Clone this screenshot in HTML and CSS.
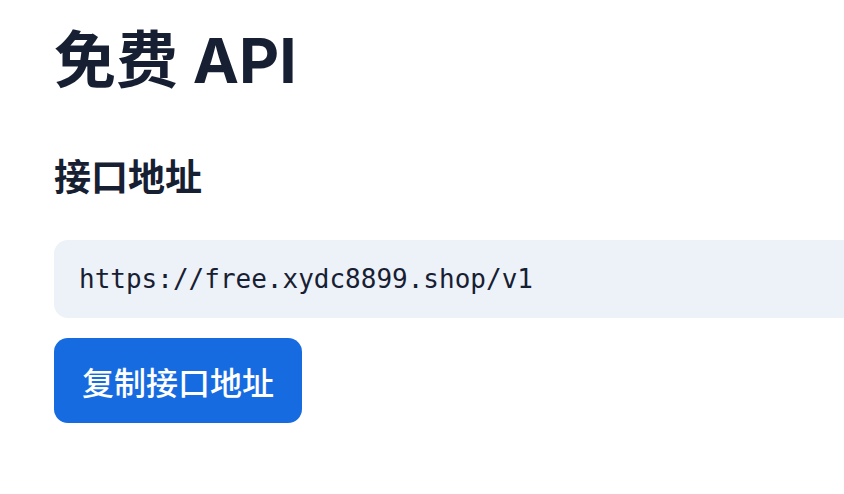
FILE: index.html
```html
<!DOCTYPE html>
<html lang="zh-CN">
<head>
<meta charset="utf-8">
<title>免费 API</title>
<link rel="stylesheet" href="styles.css">
</head>
<body>
<main class="page">
  <h1 class="title">免费 API</h1>
  <h2 class="section-title">接口地址</h2>
  <div class="endpoint"><code class="endpoint-url">https://free.xydc8899.shop/v1</code></div>
  <button class="copy-btn" type="button">复制接口地址</button>
</main>
</body>
</html>
```

FILE: styles.css
```css
html, body {
  margin: 0;
  padding: 0;
  background: #ffffff;
  overflow: hidden;
}

body {
  font-family: "Inter", "Noto Sans CJK SC", sans-serif;
  color: #172033;
}

.page {
  width: 1000px;
  padding: 21px 0 0 54px;
  display: flex;
  flex-direction: column;
  align-items: flex-start;
}

.title {
  margin: 0;
  font-size: 62px;
  line-height: 80px;
  font-weight: 700;
  letter-spacing: 0;
}

.section-title {
  margin: 52px 0 0 0;
  font-size: 37px;
  line-height: 50px;
  font-weight: 700;
}

.endpoint {
  margin-top: 37px;
  align-self: stretch;
  height: 78px;
  background: #edf2f8;
  border-radius: 14px;
  display: flex;
  align-items: center;
  padding-left: 25px;
}

.endpoint-url {
  font-family: "DejaVu Sans Mono", monospace;
  font-size: 26px;
  color: #172033;
}

.copy-btn {
  margin-top: 20px;
  height: 85px;
  padding: 0 28px;
  border: none;
  border-radius: 14px;
  background: #176be0;
  color: #ffffff;
  font-family: "Inter", "Noto Sans CJK SC", sans-serif;
  font-size: 32px;
  font-weight: 500;
  cursor: pointer;
}
```
